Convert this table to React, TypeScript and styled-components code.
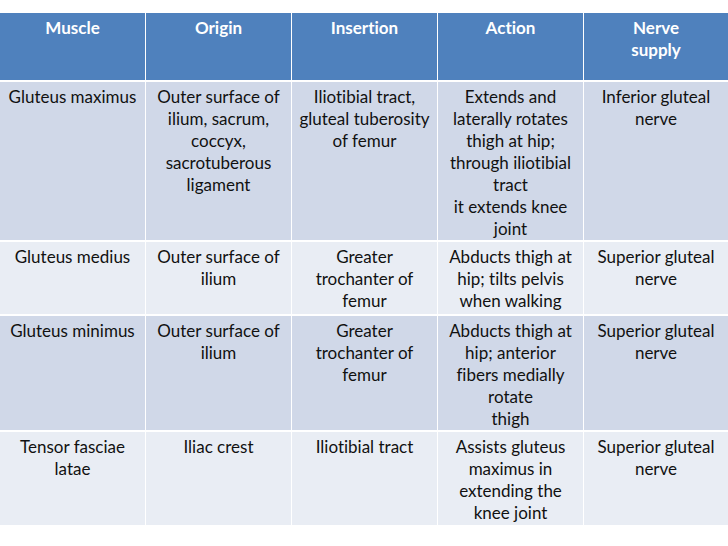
import React from "react";
import styled, { createGlobalStyle } from "styled-components";

const Global = createGlobalStyle`
  html, body { margin: 0; padding: 0; background: #ffffff; }
  body { font-family: Lato, "Open Sans", "Liberation Sans", sans-serif; }
`;

const Page = styled.div`
  width: 728px;
  height: 546px;
  background: #ffffff;
  padding-top: 13px;
  box-sizing: border-box;
`;

const Grid = styled.div`
  display: grid;
  grid-template-columns: 145px 145px 145px 145px 144px;
  column-gap: 1px;
  row-gap: 2px;
  width: 728px;
`;

const Cell = styled.div<{ $kind: "head" | "odd" | "even"; $h: number }>`
  height: ${(p) => p.$h}px;
  box-sizing: border-box;
  padding-top: 4px;
  text-align: center;
  font-size: 17px;
  line-height: 22px;
  font-variant-ligatures: none;
  font-feature-settings: "liga" 0, "dlig" 0;
  color: ${(p) => (p.$kind === "head" ? "#ffffff" : "#111111")};
  font-weight: ${(p) => (p.$kind === "head" ? 700 : 400)};
  background: ${(p) =>
    p.$kind === "head" ? "#4f81bd" : p.$kind === "odd" ? "#d0d8e8" : "#e9edf4"};
`;

const Line = styled.div`
  white-space: nowrap;
`;

type Row = { kind: "head" | "odd" | "even"; h: number; cells: string[][] };

const rows: Row[] = [
  {
    kind: "head",
    h: 67,
    cells: [["Muscle"], ["Origin"], ["Insertion"], ["Action"], ["Nerve", "supply"]],
  },
  {
    kind: "odd",
    h: 158,
    cells: [
      ["Gluteus maximus"],
      ["Outer surface of", "ilium, sacrum,", "coccyx,", "sacrotuberous", "ligament"],
      ["Iliotibial tract,", "gluteal tuberosity", "of femur"],
      [
        "Extends and",
        "laterally rotates",
        "thigh at hip;",
        "through iliotibial",
        "tract",
        "it extends knee",
        "joint",
      ],
      ["Inferior gluteal", "nerve"],
    ],
  },
  {
    kind: "even",
    h: 72,
    cells: [
      ["Gluteus medius"],
      ["Outer surface of", "ilium"],
      ["Greater", "trochanter of", "femur"],
      ["Abducts thigh at", "hip; tilts pelvis", "when walking"],
      ["Superior gluteal", "nerve"],
    ],
  },
  {
    kind: "odd",
    h: 114,
    cells: [
      ["Gluteus minimus"],
      ["Outer surface of", "ilium"],
      ["Greater", "trochanter of", "femur"],
      ["Abducts thigh at", "hip; anterior", "fibers medially", "rotate", "thigh"],
      ["Superior gluteal", "nerve"],
    ],
  },
  {
    kind: "even",
    h: 93,
    cells: [
      ["Tensor fasciae", "latae"],
      ["Iliac crest"],
      ["Iliotibial tract"],
      ["Assists gluteus", "maximus in", "extending the", "knee joint"],
      ["Superior gluteal", "nerve"],
    ],
  },
];

export default function App() {
  return (
    <Page>
      <Global />
      <Grid>
        {rows.map((r, ri) =>
          r.cells.map((lines, ci) => (
            <Cell key={`${ri}-${ci}`} $kind={r.kind} $h={r.h}>
              {lines.map((l, li) => (
                <Line key={li}>{l}</Line>
              ))}
            </Cell>
          ))
        )}
      </Grid>
    </Page>
  );
}
